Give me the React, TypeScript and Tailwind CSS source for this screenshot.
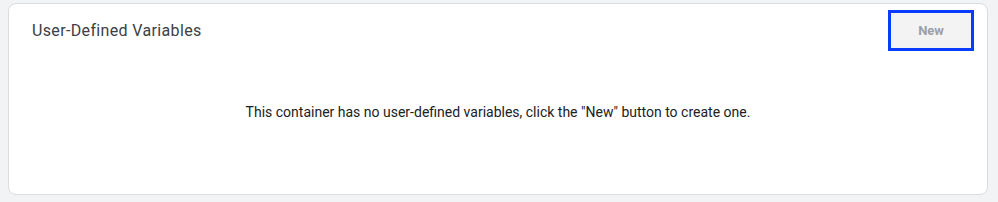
import * as React from "react";

export default function App() {
	return (
		<div className="w-[998px] h-[202px] bg-[#f1f3f4] pt-[3px] pl-[8px] font-['Roboto',sans-serif]">
			<div className="w-[980px] h-[192px] bg-white border border-[#dadce0] rounded-[8px] flex flex-col">
				<div className="flex items-center justify-between pl-[23px] pr-[13px] h-[53px]">
					<h2 className="text-[16px] text-[#3c4043] tracking-[0.35px]">
						User-Defined Variables
					</h2>
					<button className="w-[86px] h-[41px] border-[3px] border-[#0a3cff] bg-[#f3f3f3] text-[13px] font-bold text-[#9aa0a6]">
						New
					</button>
				</div>
				<div className="flex-1 flex items-center justify-center pb-[26px]">
					<p className="text-[14px] text-[#202124]">
						This container has no user-defined variables, click the "New" button to create one.
					</p>
				</div>
			</div>
		</div>
	);
}
